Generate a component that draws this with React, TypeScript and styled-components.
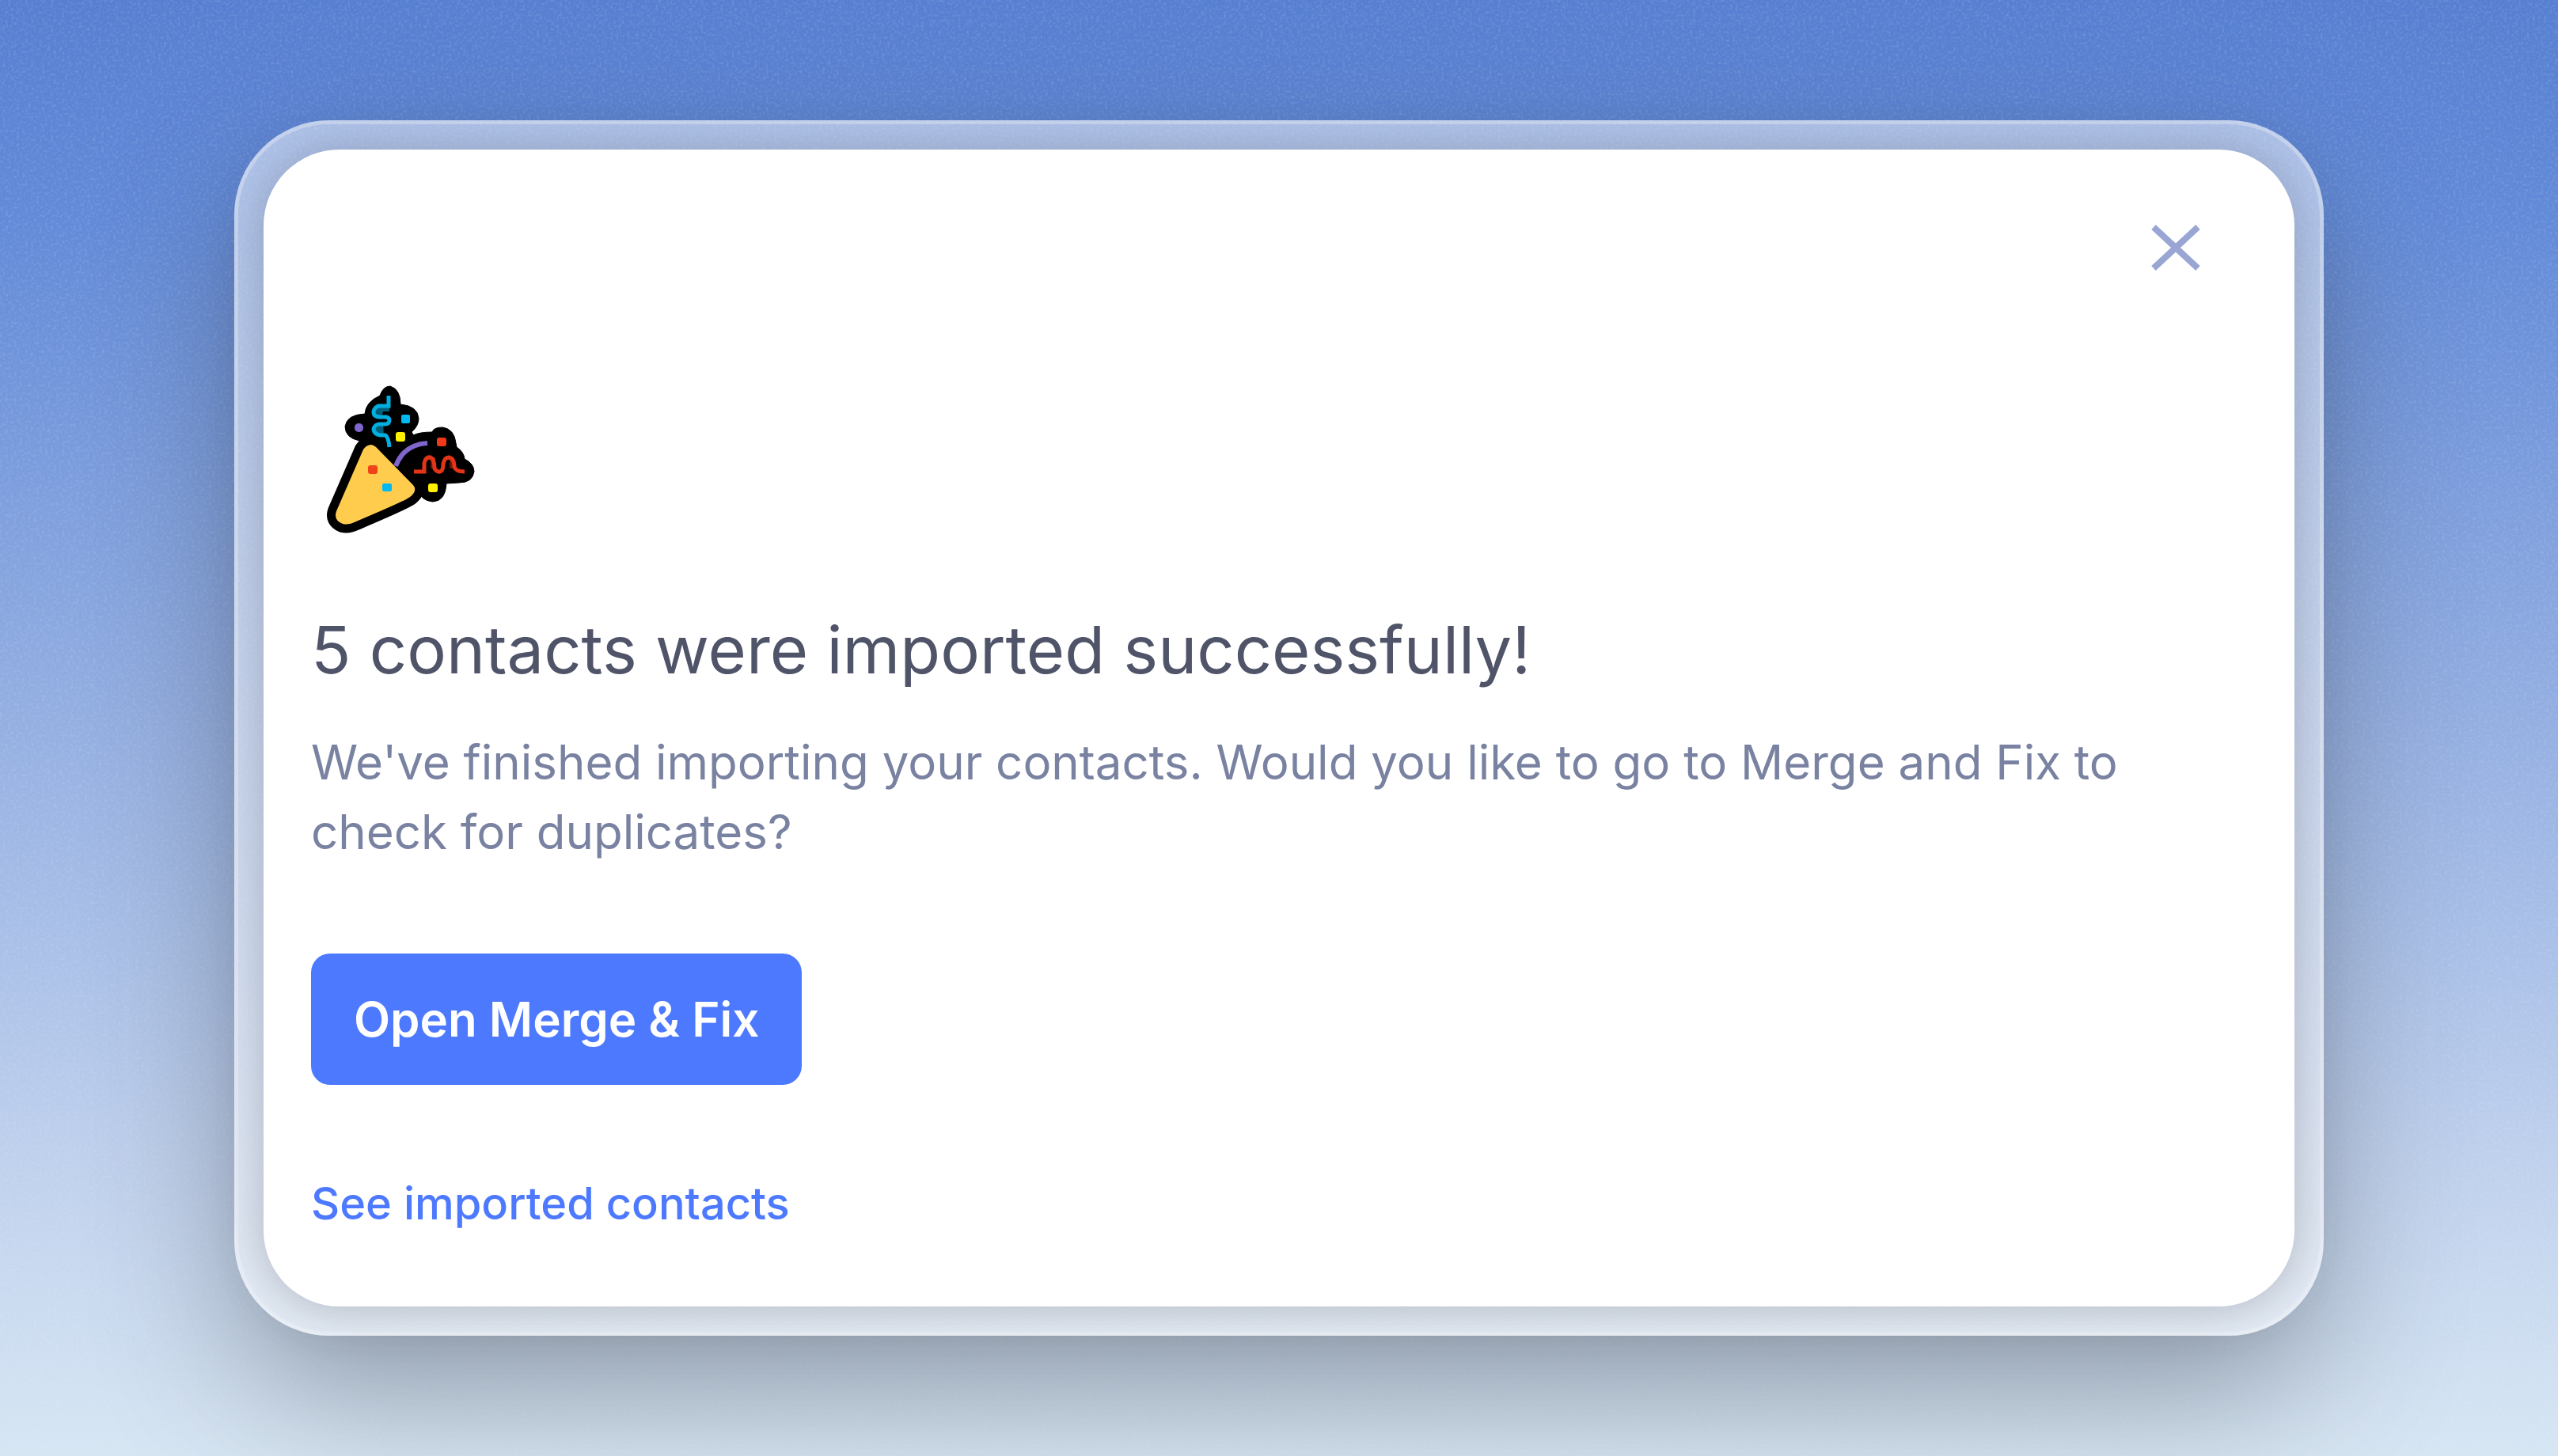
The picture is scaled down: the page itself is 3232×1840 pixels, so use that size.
import React from "react";
import styled, { createGlobalStyle } from "styled-components";

const GlobalStyle = createGlobalStyle`
  *, *::before, *::after { box-sizing: border-box; }
  body { margin: 0; }
`;

const Backdrop = styled.main`
  position: relative;
  isolation: isolate;
  min-height: 100vh;
  padding: 152px 296px;
  display: flex;
  overflow: hidden;
  background: linear-gradient(180deg, #577fd1 0%, #628ad8 15%, #92ade1 48%, #a7bee7 63%, #c0d1ed 80%, #d7e6f3 100%);
  font-family: Inter, "Liberation Sans", sans-serif;
`;

const Grain = styled.svg`
  position: absolute;
  inset: 0;
  z-index: -1;
  width: 100%;
  height: 100%;
`;

const Frame = styled.div`
  flex: 1;
  display: flex;
  padding: 32px;
  border: 5px solid rgba(255, 255, 255, 0.3);
  border-radius: 120px;
  background: rgba(255, 255, 255, 0.5);
  box-shadow: 0 76px 184px -8px rgba(50, 54, 62, 0.42);
`;

const Card = styled.section`
  flex: 1;
  display: flex;
  flex-direction: column;
  align-items: flex-start;
  padding: 80px 106px 80px 60px;
  border-radius: 96px;
  background: #fff;
  box-shadow: 0 4px 64px rgba(60, 62, 70, 0.32);
`;

const CloseButton = styled.button`
  align-self: flex-end;
  display: flex;
  padding: 0;
  border: 0;
  background: none;
  color: #99a6d3;
  cursor: pointer;
`;

const Illustration = styled.svg`
  width: 230px;
  height: 220px;
  margin-top: 112px;
`;

const Title = styled.h1`
  margin: 80px 0 0;
  font-size: 83px;
  line-height: 104px;
  font-weight: 400;
  color: #505469;
`;

const Message = styled.p`
  margin: 46px 0 0;
  font-size: 60px;
  line-height: 88px;
  color: #7982a1;
`;

const PrimaryButton = styled.button`
  margin-top: 110px;
  padding: 44px 54px;
  border: 0;
  border-radius: 24px;
  background: #4d79ff;
  color: #fff;
  font: inherit;
  font-size: 60px;
  line-height: 78px;
  font-weight: 600;
  cursor: pointer;
`;

const TextLink = styled.a`
  margin-top: 110px;
  font-size: 56px;
  line-height: 80px;
  font-weight: 500;
  color: #4d79ff;
  text-decoration: none;
`;

function BackdropGrain() {
  return (
    <Grain aria-hidden="true">
      <filter id="grain" x="0" y="0" width="100%" height="100%">
        <feTurbulence type="fractalNoise" baseFrequency="0.28" numOctaves="2" seed="4" />
        <feColorMatrix values="0 0 0 0 0.82  0 0 0 0 0.9  0 0 0 0 1  1.6 0 0 0 -0.72" />
      </filter>
      <rect width="100%" height="100%" filter="url(#grain)" opacity="0.22" />
    </Grain>
  );
}

function PartyPopper() {
  const cone =
    "M69 98 Q73 92 79 92 Q84 93 88 98 L132 143 Q138 150 128 158 Q124 162 60 189 Q50 194 43 192 Q31 187 35 176 Z";
  return (
    <Illustration viewBox="3 -1 230 220" fill="none" role="img" aria-label="Party popper">
      <g fill="#000" stroke="#000" strokeLinejoin="round">
        <path d="M64 87 L92 84 L132 80 Q140 76 156 76 Q158 70 169 70 Q184 72 186 90 L187 95 Q196 101 197 110 Q209 116 209 126 Q207 140 190 140 L174 141 Q173 163 157 164 Q147 163 142 157 L110 130Z" />
        <path d="M64 87 Q46 83 46 69 Q48 54 71 53 Q72 38 90 30 Q94 18 103 18 Q116 22 116 41 Q138 43 139 59 Q139 68 130 76 L140 92 L92 104Z" />
        <path d={cone} strokeWidth="22" />
      </g>
      <path d={cone} fill="#ffcc4d" />
      <path d="M82 44 H102 V50 H94 L92 57 H82Z M82 67 H94 L95 80 H84Z" fill="#00afe0" opacity="0.55" />
      <path d="M147 108 H160 V122 H154 V112Z M171 108 H184 V122 H178 V112Z" fill="#e33516" opacity="0.45" />
      <g strokeWidth="5">
        <path d="M101 30 V43 H88 Q82 46 82 51 Q82 57 90 57 H98 Q102 58 102 61 Q102 66 96 66 H88 Q82 68 82 73 Q83 79 91 80 H97 Q101 83 102 95" stroke="#00afe0" />
        <path d="M110 119 Q120 92 150 90" stroke="#7f66cc" strokeWidth="6" />
        <path d="M133 126 H146 V115 Q148 107 154 108 Q159 110 159 122 Q162 127 166 126 Q170 125 170 116 Q172 107 178 108 Q184 110 184 120 Q186 126 197 126" stroke="#e33516" />
      </g>
      <rect x="58" y="65" width="11" height="11" rx="5" fill="#7f66cc" />
      <rect x="117" y="54" width="11" height="11" rx="2" fill="#00b9f2" />
      <rect x="110" y="76" width="12" height="12" rx="3" fill="#fff200" />
      <rect x="162" y="83" width="12" height="11" rx="3" fill="#f23a1a" />
      <rect x="151" y="141" width="12" height="11" rx="3" fill="#fff200" />
      <rect x="75" y="118" width="12" height="11" rx="3" fill="#f04418" />
      <rect x="93" y="141" width="12" height="10" rx="2" fill="#00b9f2" />
    </Illustration>
  );
}

export default function App() {
  return (
    <>
      <GlobalStyle />
      <Backdrop>
        <BackdropGrain />
        <Frame>
          <Card>
            <CloseButton type="button" aria-label="Close">
              <svg width="88" height="88" viewBox="0 0 88 88" fill="none" stroke="currentColor" strokeWidth="8">
                <path d="M16 18 L72 70 M72 18 L16 70" />
              </svg>
            </CloseButton>
            <PartyPopper />
            <Title>5 contacts were imported successfully!</Title>
            <Message>
              We've finished importing your contacts. Would you like to go to Merge and Fix to check for duplicates?
            </Message>
            <PrimaryButton type="button">Open Merge &amp; Fix</PrimaryButton>
            <TextLink href="#contacts">See imported contacts</TextLink>
          </Card>
        </Frame>
      </Backdrop>
    </>
  );
}
